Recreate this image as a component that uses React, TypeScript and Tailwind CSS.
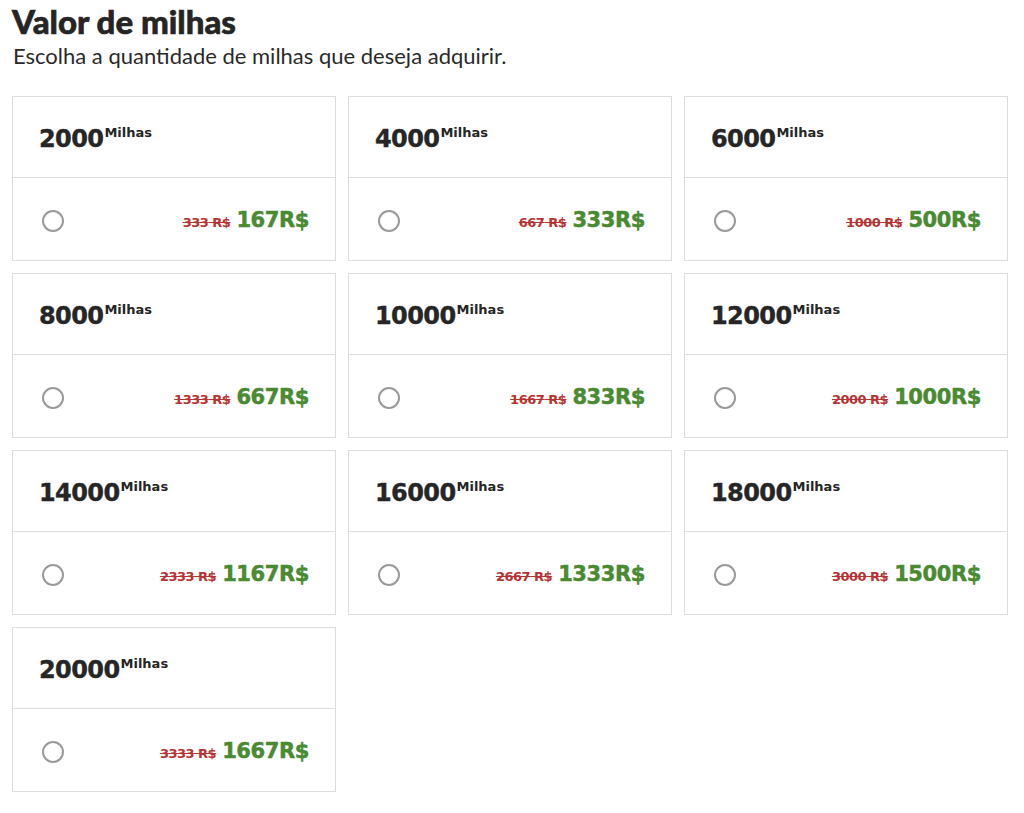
import React from "react";

const items = [
  { m: 2000, old: 333, price: 167 },
  { m: 4000, old: 667, price: 333 },
  { m: 6000, old: 1000, price: 500 },
  { m: 8000, old: 1333, price: 667 },
  { m: 10000, old: 1667, price: 833 },
  { m: 12000, old: 2000, price: 1000 },
  { m: 14000, old: 2333, price: 1167 },
  { m: 16000, old: 2667, price: 1333 },
  { m: 18000, old: 3000, price: 1500 },
  { m: 20000, old: 3333, price: 1667 },
];

const cardFont = { fontFamily: "'DejaVu Sans', Lato, sans-serif" };

export default function App() {
  return (
    <div className="min-h-[813px] bg-white px-3 pt-[1px] text-[#222]" style={{ fontFamily: "Lato, 'Noto Sans', sans-serif" }}>
      <h1 className="text-[33px] font-black leading-[40px] text-[#252525] [-webkit-text-stroke:0.6px_#252525]">Valor de milhas</h1>
      <p className="ml-[1px] mt-[1px] text-[22px] leading-[28px] text-[#2a2a2a]">Escolha a quantidade de milhas que deseja adquirir.</p>
      <div className="mt-[26px] grid w-[996px] grid-cols-3 gap-x-3 gap-y-3" style={cardFont}>
        {items.map((it) => (
          <div key={it.m} className="border border-[#dcdcdc] bg-white">
            <div className="flex h-[81px] items-center border-b border-[#dcdcdc] pl-[26px] pt-[4px]">
              <span className="text-[24px] font-bold leading-none tracking-[-0.6px] text-[#262626] [-webkit-text-stroke:0.4px_#262626]">{it.m}</span>
              <span className="-mt-[14px] ml-[1px] text-[13px] font-bold leading-none text-[#262626]">Milhas</span>
            </div>
            <div className="flex h-[82px] items-center justify-between pl-[29px] pr-[26px] pt-[4px]">
              <span className="block h-[22px] w-[22px] rounded-full border-2 border-[#9a9a9a]"></span>
              <div className="flex items-baseline gap-[6px]">
                <span className="text-[13px] font-bold tracking-[-0.5px] text-[#b83333] line-through">{it.old} R$</span>
                <span className="text-[21px] font-bold leading-none tracking-[-0.4px] text-[#4a8a32] [-webkit-text-stroke:0.5px_#4a8a32]">{it.price}R$</span>
              </div>
            </div>
          </div>
        ))}
      </div>
    </div>
  );
}
